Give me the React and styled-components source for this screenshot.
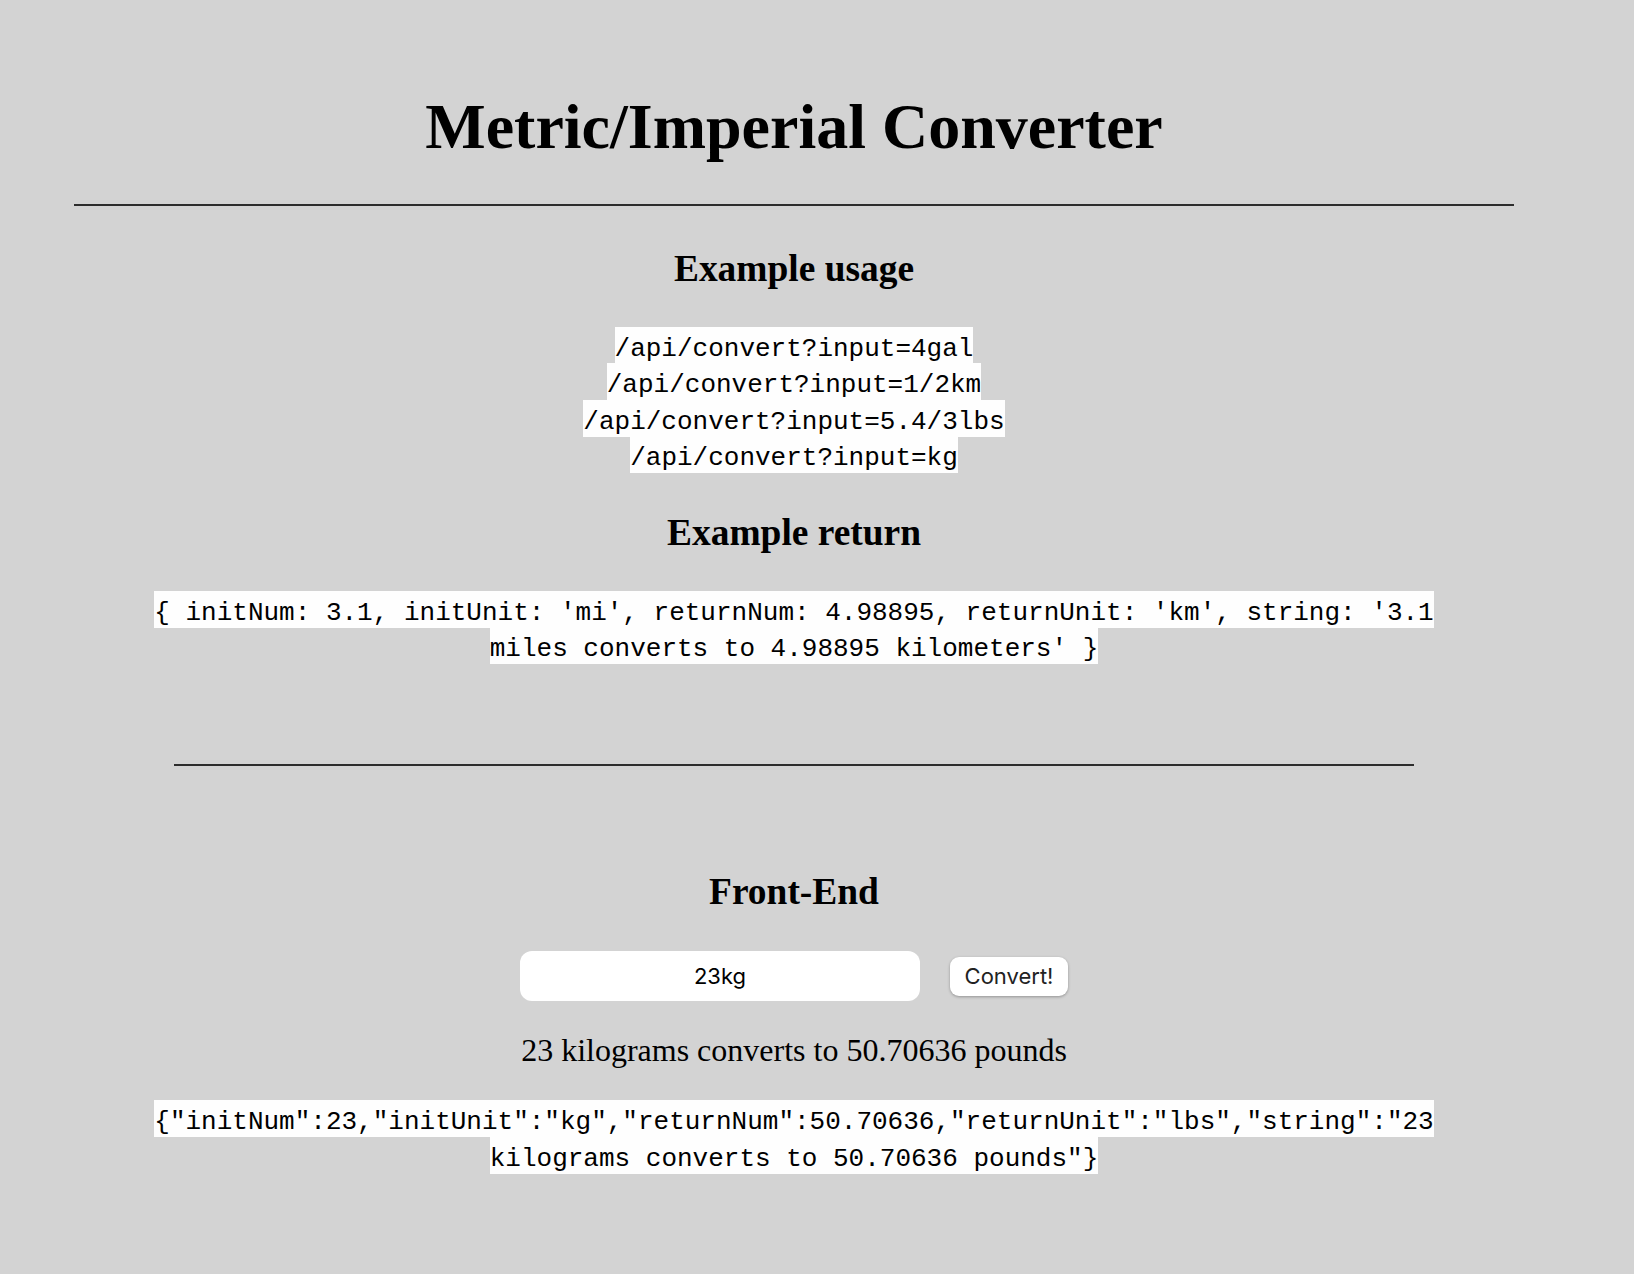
import React, { useState } from 'react'
import styled, { createGlobalStyle } from 'styled-components'

const GlobalStyle = createGlobalStyle`
  html, body {
    margin: 0;
    padding: 0;
    background: #d3d3d3;
  }
  body {
    font-family: "Liberation Serif", "Times New Roman", serif;
    color: #000;
  }
`

const Page = styled.div`
  box-sizing: border-box;
  width: 1556px;
  margin-left: 16px;
  padding-top: 90px;
  padding-bottom: 100px;
  text-align: center;
`

const Title = styled.h1`
  margin: 0;
  font-size: 64px;
  line-height: 74px;
  font-weight: 700;
`

const Rule = styled.hr`
  border: 0;
  border-top: 2px solid #2c2c2c;
  height: 0;
  margin: ${p => p.$top}px ${p => p.$side}px 0;
`

const Heading = styled.h3`
  margin: ${p => p.$top}px 0 0;
  font-size: 37.44px;
  line-height: 43px;
  font-weight: 700;
`

const CodeBlock = styled.div`
  margin: ${p => p.$top}px auto 0;
  max-width: 1330px;
  font-family: "Liberation Mono", "Courier New", monospace;
  font-size: 26px;
  line-height: 36.4px;
`

const Code = styled.code`
  font-family: inherit;
  background: #fefefe;
  padding: 7px 0 0;
`

const Form = styled.form`
  margin-top: 38px;
  display: flex;
  justify-content: center;
  align-items: center;
  gap: 30px;
`

const Field = styled.input`
  box-sizing: border-box;
  width: 400px;
  height: 50px;
  border: 0;
  border-radius: 12px;
  background: #fff;
  text-align: center;
  font-family: Inter, "Liberation Sans", sans-serif;
  font-size: 22px;
  color: #000;
  outline: none;
`

const Button = styled.button`
  box-sizing: border-box;
  width: 118px;
  height: 39px;
  border: 0;
  border-radius: 9px;
  background: #fff;
  box-shadow: 0 1px 3px rgba(0, 0, 0, 0.3);
  font-family: Inter, "Liberation Sans", sans-serif;
  font-size: 22px;
  color: #222;
  padding: 0;
`

const Result = styled.p`
  margin: 31px 0 0;
  font-size: 32px;
  line-height: 36.8px;
`

const usage = [
  '/api/convert?input=4gal',
  '/api/convert?input=1/2km',
  '/api/convert?input=5.4/3lbs',
  '/api/convert?input=kg',
]

const App = () => {
  const [input, setInput] = useState('23kg')

  return (
    <>
      <GlobalStyle />
      <Page>
        <header>
          <Title>Metric/Imperial Converter</Title>
        </header>
        <Rule $top={40} $side={58} />
        <section>
          <Heading $top={41}>Example usage</Heading>
          <CodeBlock $top={41}>
            {usage.map(u => (
              <React.Fragment key={u}>
                <Code>{u}</Code>
                <br />
              </React.Fragment>
            ))}
          </CodeBlock>
          <Heading $top={34.5}>Example return</Heading>
          <CodeBlock $top={40.5}>
            <Code>
              {"{ initNum: 3.1, initUnit: 'mi', returnNum: 4.98895, returnUnit: 'km', string: '3.1 miles converts to 4.98895 kilometers' }"}
            </Code>
          </CodeBlock>
        </section>
        <Rule $top={97} $side={158} />
        <div>
          <Heading $top={104}>Front-End</Heading>
          <Form onSubmit={e => e.preventDefault()}>
            <Field value={input} onChange={e => setInput(e.target.value)} placeholder="3.1mi" />
            <Button type="submit">Convert!</Button>
          </Form>
          <Result>23 kilograms converts to 50.70636 pounds</Result>
          <CodeBlock $top={35}>
            <Code>
              {'{"initNum":23,"initUnit":"kg","returnNum":50.70636,"returnUnit":"lbs","string":"23 kilograms converts to 50.70636 pounds"}'}
            </Code>
          </CodeBlock>
        </div>
      </Page>
    </>
  )
}

export default App
